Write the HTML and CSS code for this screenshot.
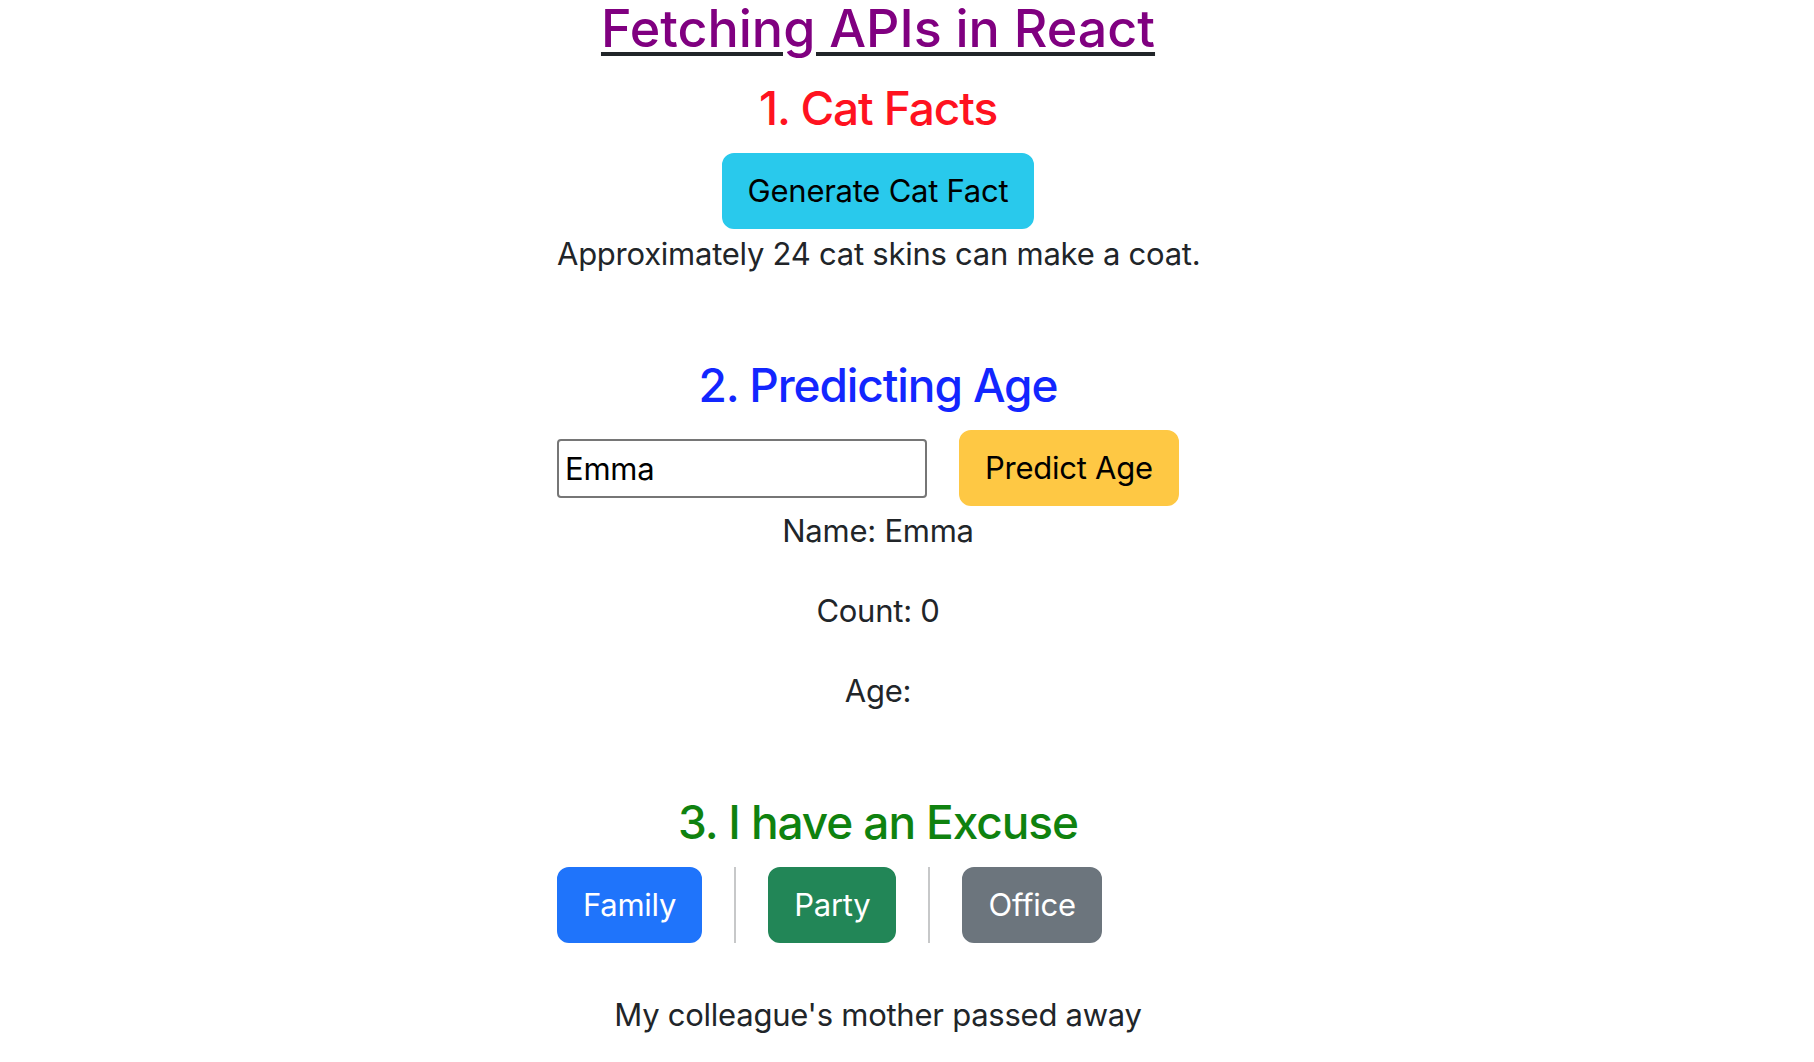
FILE: index.html
```html
<!DOCTYPE html>
<html lang="en">
<head>
<meta charset="utf-8">
<title>Fetching APIs in React</title>
<link rel="stylesheet" href="styles.css">
</head>
<body>
<div class="app">
  <h1 class="title">Fetching APIs in React</h1>
  <section class="section">
    <h2 class="heading heading-red">1. Cat Facts</h2>
    <div class="center-row"><button class="btn btn-info">Generate Cat Fact</button></div>
    <p class="text">Approximately 24 cat skins can make a coat.</p>
  </section>
  <section class="section">
    <h2 class="heading heading-blue">2. Predicting Age</h2>
    <div class="hstack">
      <input class="name-input" type="text" value="Emma">
      <button class="btn btn-warning">Predict Age</button>
    </div>
    <p class="text">Name: Emma</p>
    <p class="text">Count: 0</p>
    <p class="text">Age: </p>
  </section>
  <section class="section">
    <h2 class="heading heading-green">3. I have an Excuse</h2>
    <div class="hstack">
      <button class="btn btn-primary">Family</button>
      <div class="vr"></div>
      <button class="btn btn-success">Party</button>
      <div class="vr"></div>
      <button class="btn btn-secondary">Office</button>
    </div>
    <p class="text excuse">My colleague's mother passed away</p>
  </section>
</div>
</body>
</html>
```
FILE: styles.css
```css
* { box-sizing: border-box; }
body {
  margin: 0;
  font-family: Inter, "Noto Sans", sans-serif;
  font-size: 31px;
  letter-spacing: -0.25px;
  line-height: 48px;
  color: #212529;
  background: #fff;
}
.app {
  width: 642px;
  margin-left: 557px;
  text-align: center;
}
.title {
  margin: 0 0 21.5px;
  font-size: 52px;
  font-weight: 500;
  letter-spacing: 0;
  line-height: 58.6px;
  color: #800080;
  text-decoration: underline;
  text-decoration-color: #212529;
  text-decoration-thickness: 4px;
  text-underline-offset: 5px;
}
.section { padding-bottom: 48px; }
.section:last-child { padding-bottom: 0; }
.heading {
  margin: 0 0 15.5px;
  font-size: 46px;
  font-weight: 500;
  letter-spacing: -1.1px;
  line-height: 57.6px;
}
.heading-red { color: #ff1220; }
.heading-blue { color: #1226ff; }
.heading-green { color: #0f820f; }
.center-row { display: flex; justify-content: center; }
.btn {
  font-family: inherit;
  font-size: 31px;
  letter-spacing: -0.25px;
  line-height: 48px;
  padding: 12px 24px;
  border: 2px solid transparent;
  border-radius: 12px;
  cursor: pointer;
}
.btn-info { background: #29c9ec; border-color: #29c9ec; color: #000; }
.btn-warning { background: #fec844; border-color: #fec844; color: #000; }
.btn-primary { background: #1f74fb; border-color: #1f74fb; color: #fff; }
.btn-success { background: #228657; border-color: #228657; color: #fff; }
.btn-secondary { background: #6c757d; border-color: #6c757d; color: #fff; }
.text {
  margin: 0 0 31px;
  padding-top: 1px;
  white-space: nowrap;
}
.hstack {
  display: flex;
  align-items: center;
  gap: 32px;
}
.name-input {
  width: 370px;
  height: 59px;
  padding: 2px 6px;
  border: 2px solid #767676;
  border-radius: 4px;
  font-family: inherit;
  font-size: 31px;
  letter-spacing: -0.25px;
  color: #000;
}
.vr {
  align-self: stretch;
  width: 2px;
  background: #212529;
  opacity: .25;
}
.excuse { margin-top: 47px; }
```
